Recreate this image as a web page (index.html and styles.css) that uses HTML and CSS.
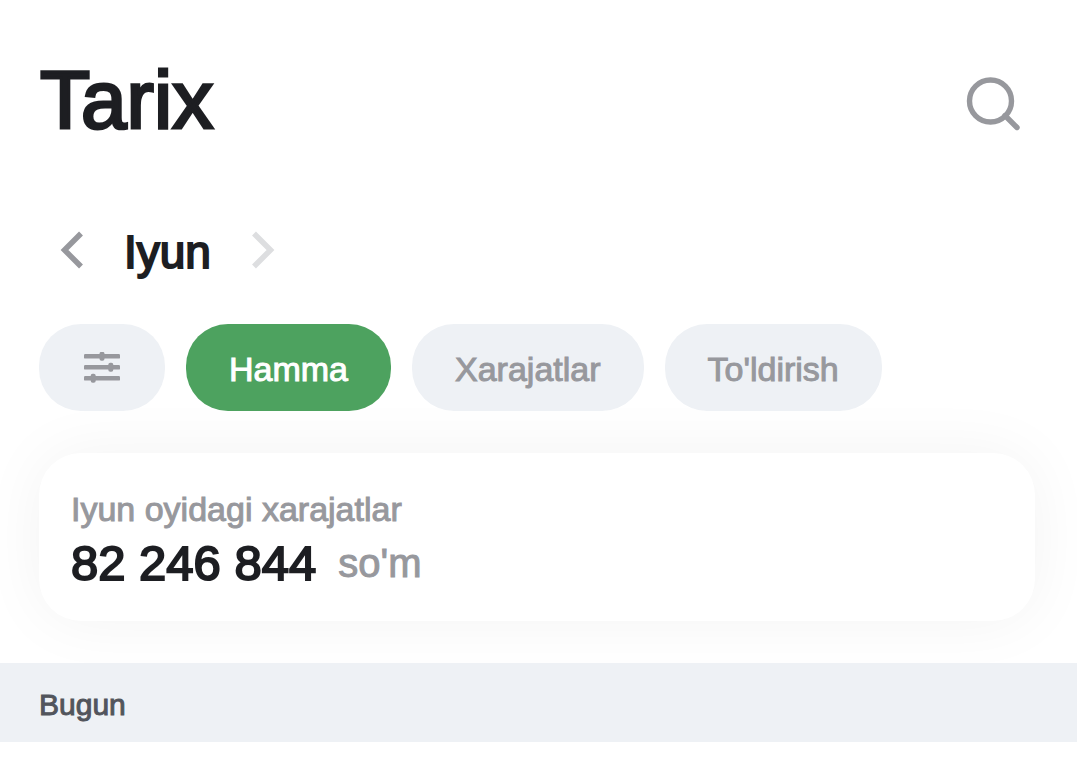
FILE: index.html
```html
<!DOCTYPE html>
<html lang="uz">
<head>
  <meta charset="UTF-8" />
  <meta name="viewport" content="width=device-width, initial-scale=1.0" />
  <title>Tarix</title>
  <link rel="stylesheet" href="styles.css">
</head>
<body>
  <header class="header">
    <h1>Tarix</h1>
    <button class="icon-btn" aria-label="Qidirish">
      <svg width="56" height="56" viewBox="0 0 56 56" fill="none" stroke="currentColor" stroke-width="5.4">
        <circle cx="25.5" cy="25" r="21" />
        <path d="M40 39.5L52 51.5" stroke-linecap="round" />
      </svg>
    </button>
  </header>

  <main>
    <div class="month">
      <button class="arrow" aria-label="Oldingi oy">
        <svg width="24" height="38" viewBox="0 0 24 38" fill="none" stroke="currentColor" stroke-width="5.5" stroke-linejoin="miter"><path d="M21 2.5L4.5 19L21 35.5" /></svg>
      </button>
      <h2>Iyun</h2>
      <button class="arrow" aria-label="Keyingi oy" disabled>
        <svg width="24" height="38" viewBox="0 0 24 38" fill="none" stroke="currentColor" stroke-width="5.5" stroke-linejoin="miter"><path d="M3 2.5L19.5 19L3 35.5" /></svg>
      </button>
    </div>

    <div class="filters">
      <button class="pill" aria-label="Filtr">
        <svg width="36" height="32" viewBox="0 0 36 32" fill="currentColor">
          <rect x="0" y="2" width="36" height="4.6" rx="1.2" />
          <rect x="0" y="13" width="36" height="4.6" rx="1.2" />
          <rect x="0" y="24" width="36" height="4.6" rx="1.2" />
          <rect x="15.5" y="-0.2" width="5" height="9" rx="2" />
          <rect x="24.3" y="10.8" width="5" height="9" rx="2" />
          <rect x="6.7" y="21.8" width="5" height="9" rx="2" />
        </svg>
      </button>
      <button class="pill text active">Hamma</button>
      <button class="pill text">Xarajatlar</button>
      <button class="pill text">To'ldirish</button>
    </div>

    <section class="card">
      <p class="card-label">Iyun oyidagi xarajatlar</p>
      <p class="total">82 246 844 <span class="currency">so'm</span></p>
    </section>

    <h3 class="day">Bugun</h3>
  </main>
</body>
</html>
```

FILE: styles.css
```css
:root{--ink:#1d1e22;--grey:#97989d;--soft:#eef1f5;--green:#4da25f}
*,*::before,*::after{box-sizing:border-box;margin:0;padding:0}
body{font-family:"Liberation Sans",Arial,sans-serif;background:#fff;color:var(--ink);min-height:100vh}
button{border:none;background:none;font-family:inherit;cursor:pointer}
svg{display:block}
.header{display:flex;align-items:flex-end;justify-content:space-between;padding:48px 56px 0 40px}
h1{font-size:82px;line-height:104px;font-weight:400;-webkit-text-stroke:3px currentColor}
.icon-btn{color:var(--grey);padding-bottom:20px}
.month{display:flex;align-items:center;gap:40px;padding:68px 60px 0}
h2{font-size:46px;line-height:56px;padding-top:4px;font-weight:400;-webkit-text-stroke:2px currentColor}
.arrow{color:var(--grey)}
.arrow:disabled{color:#dddee0;cursor:default}
.filters{display:flex;flex-wrap:wrap;gap:21px;padding:44px 42px 0 39px}
.pill{display:flex;align-items:center;justify-content:center;height:87px;min-width:126px;border-radius:42px;background:var(--soft);color:var(--grey);font-size:34px;-webkit-text-stroke:1px currentColor}
.pill.text{padding:4px 43px 0}
.pill.active{background:var(--green);color:#fff}
.card{margin:42px 42px 42px 39px;padding:32px;border-radius:42px;background:#fff;box-shadow:0 0 64px rgba(0,0,0,.05)}
.card-label{font-size:34px;line-height:48px;color:var(--grey);-webkit-text-stroke:1px currentColor}
.total{display:flex;align-items:center;gap:22px;padding-top:4px;font-size:49px;line-height:52px;-webkit-text-stroke:2px currentColor}
.currency{font-size:40px;color:var(--grey);-webkit-text-stroke:1px currentColor}
.day{padding:22px 39px 17px;font-size:30px;line-height:40px;font-weight:400;background:var(--soft);color:#52555c;-webkit-text-stroke:1px currentColor}
```
